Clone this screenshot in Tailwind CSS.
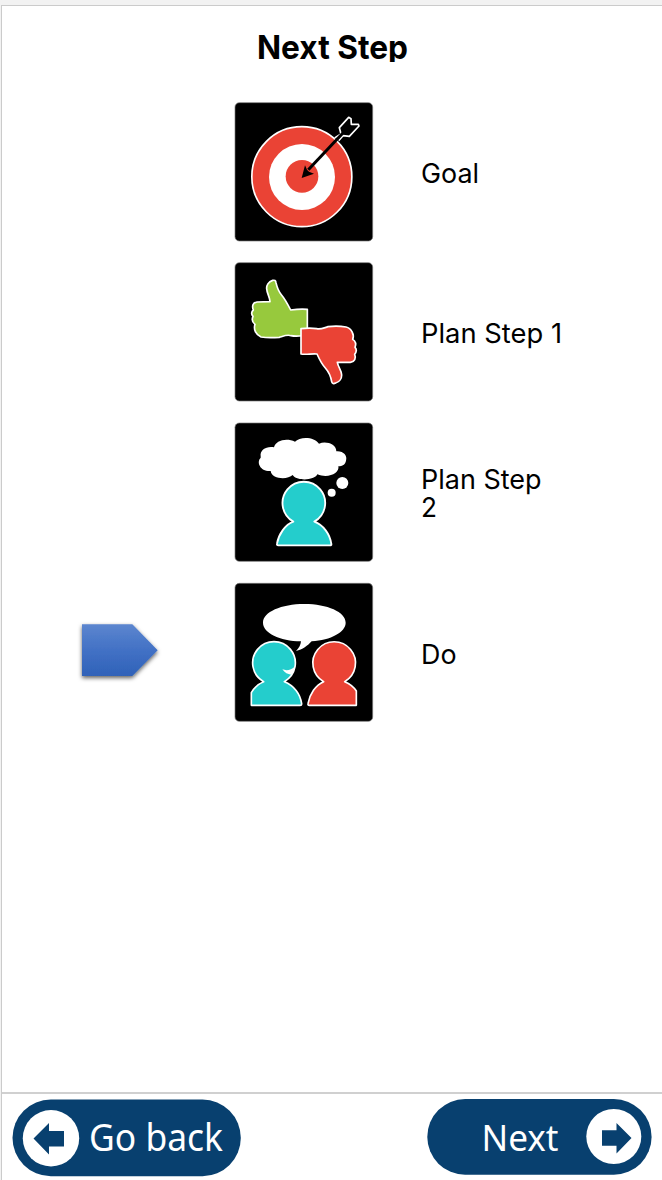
<!DOCTYPE html>
<html lang="en">
<head>
<meta charset="utf-8">
<title>Next Step</title>
<script src="https://cdn.jsdelivr.net/npm/@tailwindcss/browser@4"></script>
</head>
<body class="bg-[#f2f2f2] font-['Inter','Liberation_Sans',sans-serif] text-black">
<div class="flex h-[1180px] w-[662px] flex-col overflow-hidden pt-[5px] pl-px">
<div class="flex flex-1 flex-col border-t border-l border-[#cbcbcb] bg-white">
  <header class="h-[56px] overflow-hidden pt-[21px]">
    <svg class="block h-[36px] w-full" viewBox="2 27 660 36"><text x="257" y="59" font-size="33" font-weight="700" textLength="151" lengthAdjust="spacingAndGlyphs">Next Step</text></svg>
  </header>
  <main class="flex flex-1 flex-col gap-[5px] pt-[33px]">
    <section class="flex h-[155px] items-center pl-[223px]">
      <svg class="h-[155px] w-[160px] shrink-0" viewBox="0 0 480 465">
        <rect x="30" y="23" width="413" height="415" rx="13" stroke="#777" stroke-width="2"/>
        <circle cx="230.500" cy="245" r="150" fill="#ea4335" stroke="#fff" stroke-width="5"/>
        <circle cx="231" cy="246" r="99" fill="#fff"/>
        <circle cx="231" cy="244" r="49" fill="#ea4335"/>
        <path d="M329 129L348 117L343 98L371 67L378 71L379 88L400 88L402 93L373 124L354 122L341 137" fill="#000" stroke="#fff" stroke-width="5" stroke-linejoin="round"/>
        <path d="M353 115L250 224" stroke="#000" stroke-width="9" fill="none"/>
        <path d="M230 249L240 211L246 224L252 230L267 236Z"/>
      </svg>
      <p class="ml-[36px] w-[160px] text-[27px] leading-[28px]"><svg class="block h-[36px] w-[160px]" viewBox="0 0 160 36"><text x="0" y="28" font-size="27" textLength="58" lengthAdjust="spacingAndGlyphs">Goal</text></svg></p>
    </section>
    <section class="flex h-[155px] items-center pl-[223px]">
      <svg class="h-[155px] w-[160px] shrink-0" viewBox="0 0 480 465">
        <rect x="30" y="23" width="413" height="415" rx="13" stroke="#777" stroke-width="2"/>
        <path d="M247 241V163C230 161 211 163 197 165C190 151 180 132 169 119C158 106 156 96 153 83C152 76 149 75 143 76C130 80 124 92 125 101C126 117 134 124 135 140L96 141C84 143 80 152 85 165C79 170 78 178 84 184C80 193 82 202 90 208C85 223 92 239 108 246C127 249 149 248 163 247C179 242 188 238 198 242C214 246 231 242 247 241Z" fill="#97c93d" stroke="#fff" stroke-width="5" stroke-linejoin="round"/>
        <path d="M228 221V297C244 300 261 295 276 297C284 315 292 329 301 339C315 355 318 367 320 380C321 386 326 387 332 384C344 381 350 370 350 360C350 345 340 339 337 322L376 322C389 321 394 309 389 298C394 291 395 282 390 277C394 267 391 258 383 253C389 239 379 219 363 216C345 213 326 213 309 215C293 220 286 224 275 221C258 218 243 219 228 221Z" fill="#ea4335" stroke="#fff" stroke-width="5" stroke-linejoin="round"/>
      </svg>
      <p class="ml-[36px] w-[160px] text-[27px] leading-[28px]"><svg class="block h-[36px] w-[160px]" viewBox="0 0 160 36"><text x="0" y="28" font-size="27" textLength="141" lengthAdjust="spacingAndGlyphs">Plan Step 1</text></svg></p>
    </section>
    <section class="flex h-[155px] items-center pl-[223px]">
      <svg class="h-[155px] w-[160px] shrink-0" viewBox="0 0 480 465">
        <rect x="30" y="24" width="413" height="415" rx="13" stroke="#777" stroke-width="2"/>
        <path d="M107 124C104 105 124 93 147 97C151 76 185 67 210 80C224 64 268 64 282 86C304 77 334 88 334 109C354 107 368 121 363 137C361 148 352 154 340 154C345 174 310 192 277 178C269 197 214 199 203 180C188 195 140 193 137 168C106 170 93 142 107 128Z" fill="#fff"/>
        <circle cx="352" cy="204" r="18" fill="#fff"/><circle cx="320" cy="233" r="12" fill="#fff"/>
        <path d="M205 320A64 64 0 1 1 268 320C295 330 315 357 319 387Q320 391 315 391H160Q155 391 156 386C161 357 181 329 205 320Z" fill="#24cdcc" stroke="#fff" stroke-width="5.500" stroke-linejoin="round"/>
      </svg>
      <p class="ml-[36px] w-[160px] text-[27px] leading-[28px]"><svg class="block h-[64px] w-[160px]" viewBox="0 0 160 64"><text y="28" font-size="27" textLength="120.500" lengthAdjust="spacingAndGlyphs">Plan Step</text><text x="0" y="56" font-size="27" textLength="16" lengthAdjust="spacingAndGlyphs">2</text></svg></p>
    </section>
    <section class="flex h-[155px] items-center pl-[68px]">
      <svg class="mr-[55px] mb-[5px] h-[80px] w-[100px] shrink-0" viewBox="0 0 300 240">
        <defs><linearGradient id="blue" x2="0" y2="1"><stop stop-color="#5c86cf"/><stop offset=".5" stop-color="#4271c5"/><stop offset="1" stop-color="#2f62b8"/></linearGradient>
        <filter id="shadow" x="-20%" y="-20%" width="140%" height="150%"><feDropShadow dx="0" dy="6" stdDeviation="6" flood-color="#000" flood-opacity=".63"/></filter></defs>
        <path d="M36 43H187L263 121L187 198H36Z" fill="url(#blue)" filter="url(#shadow)"/>
      </svg>
      <svg class="h-[155px] w-[160px] shrink-0" viewBox="0 0 480 465">
        <rect x="30" y="25" width="413" height="414" rx="13" stroke="#777" stroke-width="2"/>
        <path d="M228 199C164 198 114 174 114 143C114 111 169 87 238 87C307 87 362 111 362 143C362 171 318 195 260 199C248 212 233 224 213 228C223 218 227 210 228 199Z" fill="#fff"/>
        <path d="M116 320A64 64 0 1 1 178 320C207 331 226 357 230 386Q230 391 225 391H79V353C88 338 101 326 116 320Z" fill="#24cdcc" stroke="#fff" stroke-width="5" stroke-linejoin="round"/>
        <path d="M172 283C185 288 198 286 211 273C209 285 206 292 198 299C189 298 179 294 172 283Z" fill="#fff"/>
        <path d="M296 320A64 64 0 1 1 359 320C374 326 386 335 394 348V391H253Q248 391 249 386C254 357 272 330 296 320Z" fill="#ea4335" stroke="#fff" stroke-width="5" stroke-linejoin="round"/>
      </svg>
      <p class="ml-[36px] w-[160px] pt-[2px] text-[27px] leading-[28px]"><svg class="block h-[36px] w-[160px]" viewBox="0 0 160 36"><text x="0" y="28" font-size="27" textLength="35.500" lengthAdjust="spacingAndGlyphs">Do</text></svg></p>
    </section>
  </main>
  <footer class="flex h-[88px] justify-between border-t-2 border-[#d0d0d0] pt-[5px] pr-[10px] pl-[10px] font-['Noto_Sans',sans-serif]">
    <button class="block h-[78px] w-[229px]" aria-label="Go back">
      <svg class="block h-[78px] w-[229px]" viewBox="12 1099 229 78">
        <rect x="12.500" y="1099.500" width="228.300" height="76.700" rx="38.300" fill="#08406f"/>
        <circle cx="51" cy="1138.300" r="28.200" fill="#fff"/>
        <path d="M33.500 1138.500L49 1123V1131H64V1146.500H49V1154.500Z" fill="#08406f"/>
        <text x="89" y="1151" font-size="38" fill="#fff" textLength="134" lengthAdjust="spacingAndGlyphs">Go back</text>
      </svg>
    </button>
    <button class="block h-[78px] w-[225px]" aria-label="Next">
      <svg class="block h-[78px] w-[225px]" viewBox="427 1099 225 78">
        <rect x="427.300" y="1099" width="224.300" height="75.700" rx="37.800" fill="#08406f"/>
        <circle cx="613.800" cy="1136.500" r="27.500" fill="#fff"/>
        <path d="M631.500 1138L616.500 1123V1130.300H602V1145.700H616.500V1153.500Z" fill="#08406f"/>
        <text x="481.500" y="1151" font-size="37" fill="#fff" textLength="77" lengthAdjust="spacingAndGlyphs">Next</text>
      </svg>
    </button>
  </footer>
</div>
</div>
</body>
</html>
